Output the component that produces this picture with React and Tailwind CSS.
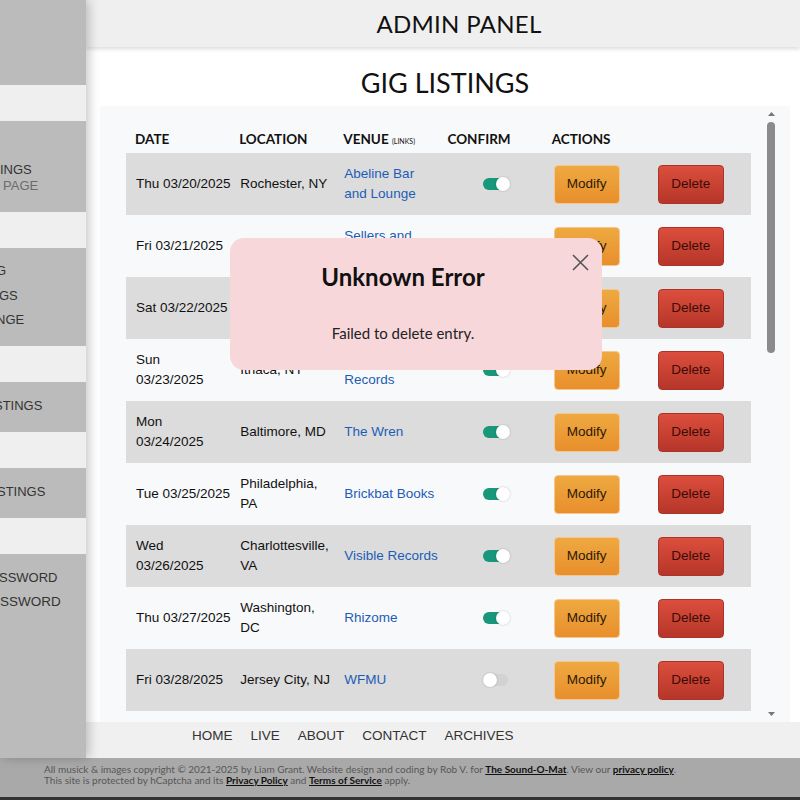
import React from 'react';

const gigs = [
  { date: ['Thu 03/20/2025'], location: ['Rochester, NY'], venue: ['Abeline Bar', 'and Lounge'], on: true },
  { date: ['Fri 03/21/2025'], location: ['Providence, RI'], venue: ['Sellers and', 'Newel'], on: true },
  { date: ['Sat 03/22/2025'], location: ['Buffalo, NY'], venue: ['Sugar City'], on: true },
  { date: ['Sun', '03/23/2025'], location: ['Ithaca, NY'], venue: ['Angry Mom', 'Records'], on: true },
  { date: ['Mon', '03/24/2025'], location: ['Baltimore, MD'], venue: ['The Wren'], on: true },
  { date: ['Tue 03/25/2025'], location: ['Philadelphia,', 'PA'], venue: ['Brickbat Books'], on: true },
  { date: ['Wed', '03/26/2025'], location: ['Charlottesville,', 'VA'], venue: ['Visible Records'], on: true },
  { date: ['Thu 03/27/2025'], location: ['Washington,', 'DC'], venue: ['Rhizome'], on: true },
  { date: ['Fri 03/28/2025'], location: ['Jersey City, NJ'], venue: ['WFMU'], on: false },
];

const Lines = ({ lines }) => (
  <>
    {lines.map((l) => (
      <span key={l} className="block whitespace-nowrap">
        {l}
      </span>
    ))}
  </>
);

/**
 * Sidebar nav, mostly slid off the left edge of the screen
 */
const Sidebar = () => (
  <aside className="relative z-10 w-[86px] shrink-0 flex flex-col bg-[#bbbbbb] overflow-hidden shadow-[3px_0_10px_rgba(0,0,0,0.22)] font-['Liberation_Sans',Arial,sans-serif] text-[13px] text-[#333]">
    <div className="h-[85px]" />
    <div className="h-[36px] bg-[#efefef]" />
    <div className="h-[91px] pt-[41px] leading-[16px]">
      <span className="block whitespace-nowrap">INGS</span>
      <span className="block whitespace-nowrap ml-[3px] text-[#6b6b6b]">PAGE</span>
    </div>
    <div className="h-[36px] bg-[#efefef]" />
    <div className="h-[98px] pt-[11px] leading-[24.5px]">
      <span className="block whitespace-nowrap ml-[-4px]">G</span>
      <span className="block whitespace-nowrap ml-[-1px]">GS</span>
      <span className="block whitespace-nowrap ml-[-4px]">NGE</span>
    </div>
    <div className="h-[36px] bg-[#efefef]" />
    <div className="h-[50px] pt-[14px] leading-[20px]">
      <span className="block whitespace-nowrap ml-[-6px]">STINGS</span>
    </div>
    <div className="h-[36px] bg-[#efefef]" />
    <div className="h-[50px] pt-[14px] leading-[20px]">
      <span className="block whitespace-nowrap ml-[-3px]">STINGS</span>
    </div>
    <div className="h-[36px] bg-[#efefef]" />
    <div className="flex-1 pt-[12px] leading-[24px]">
      <span className="block whitespace-nowrap ml-[-1px]">SSWORD</span>
      <span className="block whitespace-nowrap ml-[0px] text-[13.5px]">SSWORD</span>
    </div>
  </aside>
);

const Toggle = ({ on }) => (
  <div className="relative w-[27px] h-[14px]">
    <div className={`absolute left-0 top-[1px] w-[25px] h-[12px] rounded-full ${on ? 'bg-[#18977a]' : 'bg-[#d2d2d2]'}`} />
    <div
      className={`absolute top-0 w-[14px] h-[14px] rounded-full bg-white shadow-[0_0_2px_rgba(0,0,0,0.25)] ${on ? 'right-0' : 'left-0'}`}
    />
  </div>
);

const GigRow = ({ gig, index }) => (
  <div
    className={`grid grid-cols-6 h-[62px] items-center font-['Liberation_Sans',Arial,sans-serif] text-[13.5px] leading-[20px] text-[#111] ${
      index % 2 === 0 ? 'bg-[#dcdcdc]' : ''
    }`}
  >
    <div className="pl-[10px]">
      <Lines lines={gig.date} />
    </div>
    <div className="pl-[10px]">
      <Lines lines={gig.location} />
    </div>
    <div className="pl-[10px] text-[#1d5cb6]">
      <Lines lines={gig.venue} />
    </div>
    <div className="pl-[45px]">
      <Toggle on={gig.on} />
    </div>
    <div className="pl-[11px]">
      <button className="w-[66px] h-[39px] rounded-[4px] border border-[#f5c78f] bg-linear-to-b from-[#eea940] to-[#e88f2c] text-[#2b1906]">
        Modify
      </button>
    </div>
    <div className="pl-[11px]">
      <button className="w-[66px] h-[39px] rounded-[4px] border border-[#a9352a] bg-linear-to-b from-[#dc4e3d] to-[#b63629] text-[#3a0c07]">
        Delete
      </button>
    </div>
  </div>
);

const Scrollbar = () => (
  <div className="w-[16px] shrink-0 flex flex-col items-center pt-[6px] pb-[6px]">
    <svg width="7" height="4" viewBox="0 0 7 4">
      <path d="M0 4 L3.5 0 L7 4 Z" fill="#777" />
    </svg>
    <div className="mt-[6px] w-[8px] h-[231px] rounded-full bg-[#8b8b8b]" />
    <div className="flex-1" />
    <svg width="7" height="4" viewBox="0 0 7 4">
      <path d="M0 0 L3.5 4 L7 0 Z" fill="#777" />
    </svg>
  </div>
);

const ErrorModal = () => (
  <div className="absolute left-[230px] top-[238px] w-[372px] h-[132px] rounded-[14px] bg-[#f8d7da] pr-[26px] text-center font-['Lato',sans-serif] text-[#111] z-20">
    <button className="absolute right-[13px] top-[16px] w-[17px] h-[17px]">
      <svg width="17" height="17" viewBox="0 0 17 17">
        <path d="M1 1 L16 16 M16 1 L1 16" stroke="#555" strokeWidth="1.6" />
      </svg>
    </button>
    <h2 className="pt-[24px] text-[24px] leading-[30px] font-bold">Unknown Error</h2>
    <p className="mt-[31px] text-[15px] leading-[20px] text-[#222]">Failed to delete entry.</p>
  </div>
);

export default function App() {
  return (
    <div className="relative w-[800px] h-[800px] overflow-hidden bg-white">
      <div className="flex h-[758px]">
        <Sidebar />
        <main className="flex-1 flex flex-col min-w-0">
          <header className="h-[47px] shrink-0 bg-[#efefef] shadow-[0_2px_4px_rgba(0,0,0,0.14)] flex items-center justify-center pl-[32px] font-['Lato',sans-serif] text-[24px] text-[#111] tracking-[0.3px]">
            ADMIN PANEL
          </header>
          <h1 className="h-[59px] shrink-0 pt-[18px] pl-[4px] text-center leading-[36px] text-[27px] font-['Lato',sans-serif] text-[#111]">
            GIG LISTINGS
          </h1>
          <div className="ml-[14px] mr-[10px] h-[616px] shrink-0 bg-[#f8f9fa] flex overflow-hidden">
            <div className="flex-1 pl-[26px] pr-[12px] pt-[19px] overflow-hidden">
              <div className="grid grid-cols-6 h-[28px] items-center font-['Lato',sans-serif] font-bold text-[13.5px] text-[#111]">
                <div className="pl-[9px]">DATE</div>
                <div className="pl-[9px]">LOCATION</div>
                <div className="pl-[9px] whitespace-nowrap">
                  VENUE <span className="text-[7px] font-normal">(LINKS)</span>
                </div>
                <div className="pl-[9px]">CONFIRM</div>
                <div className="pl-[9px]">ACTIONS</div>
                <div />
              </div>
              {gigs.map((gig, i) => (
                <GigRow key={gig.date.join(' ')} gig={gig} index={i} />
              ))}
            </div>
            <Scrollbar />
            <div className="w-[11px] shrink-0" />
          </div>
          <nav className="flex-1 bg-[#f0f0f0] flex items-start pt-[6px] pl-[106px] gap-[18px] font-['Liberation_Sans',Arial,sans-serif] text-[13.5px] leading-[16px] text-[#333]">
            <span>HOME</span>
            <span>LIVE</span>
            <span>ABOUT</span>
            <span>CONTACT</span>
            <span>ARCHIVES</span>
          </nav>
        </main>
      </div>
      <footer className="h-[39px] bg-[#a9a9a9] pl-[44px] pt-[6px] font-['Lato',sans-serif] text-[10px] leading-[11px] text-[#575757]">
        <p className="whitespace-nowrap">
          All musick &amp; images copyright © 2021-2025 by Liam Grant. Website design and coding by Rob V. for{' '}
          <a className="font-bold text-[#111] underline">The Sound-O-Mat</a>. View our{' '}
          <a className="font-bold text-[#111] underline">privacy policy</a>.
        </p>
        <p className="whitespace-nowrap">
          This site is protected by hCaptcha and its <a className="font-bold text-[#111] underline">Privacy Policy</a> and{' '}
          <a className="font-bold text-[#111] underline">Terms of Service</a> apply.
        </p>
      </footer>
      <div className="h-[3px] bg-[#333]" />
      <ErrorModal />
    </div>
  );
}
